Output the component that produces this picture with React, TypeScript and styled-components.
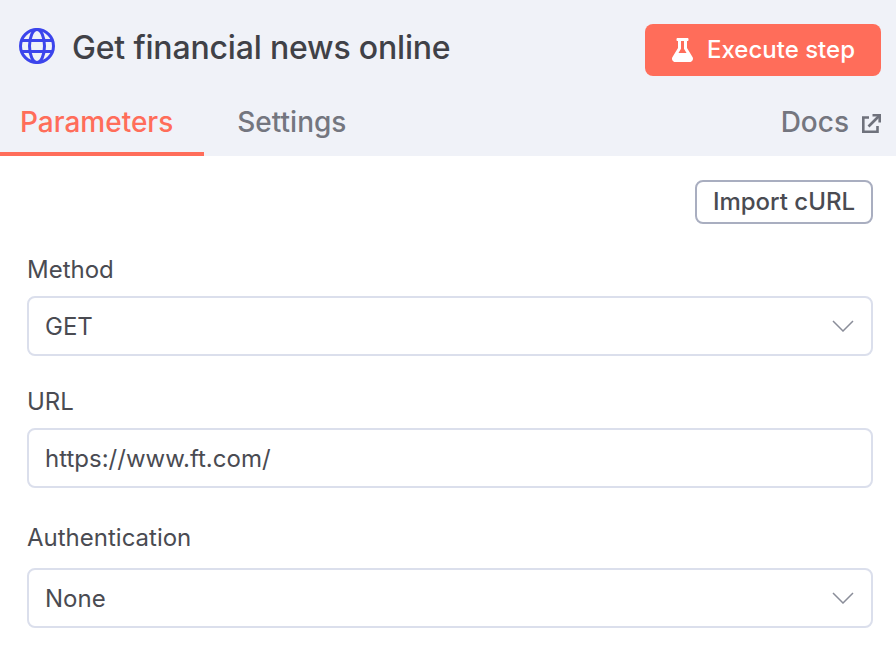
import React from 'react';
import styled, { createGlobalStyle } from 'styled-components';
import { FaFlask } from 'react-icons/fa';

const GlobalStyle = createGlobalStyle`
    html, body {
        margin: 0;
        padding: 0;
        background: #ffffff;
    }
    * {
        box-sizing: border-box;
    }
`;

const GlobeIcon = () => (
    <svg width="36" height="36" viewBox="0 0 36 36" fill="none" stroke="#3c45ec" strokeWidth="3">
        <circle cx="18" cy="18" r="16.5" />
        <ellipse cx="18" cy="18" rx="7.5" ry="16.5" />
        <path d="M2.5 12.5H33.5M2.5 23.5H33.5" />
    </svg>
);

const ExternalIcon = () => (
    <svg width="20" height="20" viewBox="0 0 20 20" fill="none" stroke="#6f727c" strokeWidth="2.6">
        <path d="M8 3.5H2.3V17.7H16.5V12" />
        <path d="M7.5 12.5L18 2" />
        <path d="M11.5 1.3H18.7V8.5" />
    </svg>
);

const Chevron = () => (
    <svg width="22" height="12" viewBox="0 0 22 12" fill="none" stroke="#8a8d99" strokeWidth="1.5">
        <path d="M1 1L11 11L21 1" />
    </svg>
);

const App: React.FC = () => {
    return (
        <Panel>
            <GlobalStyle />
            <Header>
                <TitleRow>
                    <Title>
                        <GlobeIcon />
                        <h1>Get financial news online</h1>
                    </Title>
                    <ExecuteButton>
                        <FlaskIcon />
                        Execute step
                    </ExecuteButton>
                </TitleRow>
                <Tabs>
                    <Tab $active>Parameters</Tab>
                    <Tab>Settings</Tab>
                    <DocsLink>
                        Docs
                        <ExternalIcon />
                    </DocsLink>
                </Tabs>
            </Header>
            <Body>
                <ImportRow>
                    <ImportButton>Import cURL</ImportButton>
                </ImportRow>
                <Field>
                    <Label>Method</Label>
                    <Control>
                        GET
                        <Chevron />
                    </Control>
                </Field>
                <Field $loose>
                    <Label>URL</Label>
                    <Control>https://www.ft.com/</Control>
                </Field>
                <Field>
                    <Label $loose>Authentication</Label>
                    <Control>
                        None
                        <Chevron />
                    </Control>
                </Field>
            </Body>
        </Panel>
    );
};

const Panel = styled.div`
    width: 896px;
    height: 656px;
    overflow: hidden;
    background: #ffffff;
    font-family: Inter, "Liberation Sans", sans-serif;
    color: #404147;
`;

const Header = styled.header`
    height: 156px;
    background: #f0f2f8;
    display: flex;
    flex-direction: column;
`;

const TitleRow = styled.div`
    display: flex;
    align-items: flex-start;
    justify-content: space-between;
    padding: 24px 15px 0 19px;
`;

const Title = styled.div`
    display: flex;
    align-items: flex-start;
    gap: 17px;
    padding-top: 4px;

    h1 {
        margin: 0;
        font-size: 32px;
        font-weight: 500;
        letter-spacing: -0.18px;
        line-height: 40px;
    }
`;

const ExecuteButton = styled.button`
    width: 236px;
    height: 52px;
    border: none;
    border-radius: 8px;
    padding: 0 0 2px;
    background: #ff6d5a;
    color: #ffffff;
    font: 500 24px Inter, "Liberation Sans", sans-serif;
    display: flex;
    align-items: center;
    justify-content: center;
    gap: 13px;
`;

const FlaskIcon = styled(FaFlask)`
    width: 23px;
    height: 24px;
    margin-top: 2px;
`;

const Tabs = styled.nav`
    margin-top: auto;
    height: 80px;
    display: flex;
    align-items: stretch;
`;

const Tab = styled.div<{ $active?: boolean }>`
    padding: 26px 31px 0 20px;
    font-size: 28px;
    font-weight: 500;
    line-height: 40px;
    color: ${({ $active }) => ($active ? '#ff6d5a' : '#74767f')};
    border-bottom: 4px solid ${({ $active }) => ($active ? '#ff6d5a' : 'transparent')};

    & + & {
        margin-left: 13px;
    }
`;

const DocsLink = styled.div`
    margin-left: auto;
    padding: 26px 15px 0 0;
    display: flex;
    align-items: flex-start;
    gap: 12px;
    font-size: 28px;
    font-weight: 500;
    line-height: 40px;
    color: #74767f;

    svg {
        margin-top: 12px;
    }
`;

const Body = styled.main`
    padding: 24px 23px 0 27px;
    display: flex;
    flex-direction: column;
`;

const ImportRow = styled.div`
    display: flex;
    justify-content: flex-end;
    margin-bottom: 28px;
`;

const ImportButton = styled.button`
    width: 178px;
    height: 44px;
    border: 2px solid #a9aec0;
    border-radius: 8px;
    padding: 0 0 2px;
    background: #ffffff;
    color: #4a4b52;
    font: 500 24px Inter, "Liberation Sans", sans-serif;
`;

const Field = styled.div<{ $loose?: boolean }>`
    margin-bottom: ${({ $loose }) => ($loose ? '32px' : '28px')};
`;

const Label = styled.div<{ $loose?: boolean }>`
    font-size: 24px;
    line-height: 36px;
    margin-bottom: ${({ $loose }) => ($loose ? '12px' : '8px')};
    color: #4a4b52;
`;

const Control = styled.div`
    height: 60px;
    border: 2px solid #dbdfec;
    border-radius: 8px;
    padding: 0 17px 0 16px;
    display: flex;
    align-items: center;
    justify-content: space-between;
    font-size: 24px;
    color: #4a4b52;
`;

export default App;
